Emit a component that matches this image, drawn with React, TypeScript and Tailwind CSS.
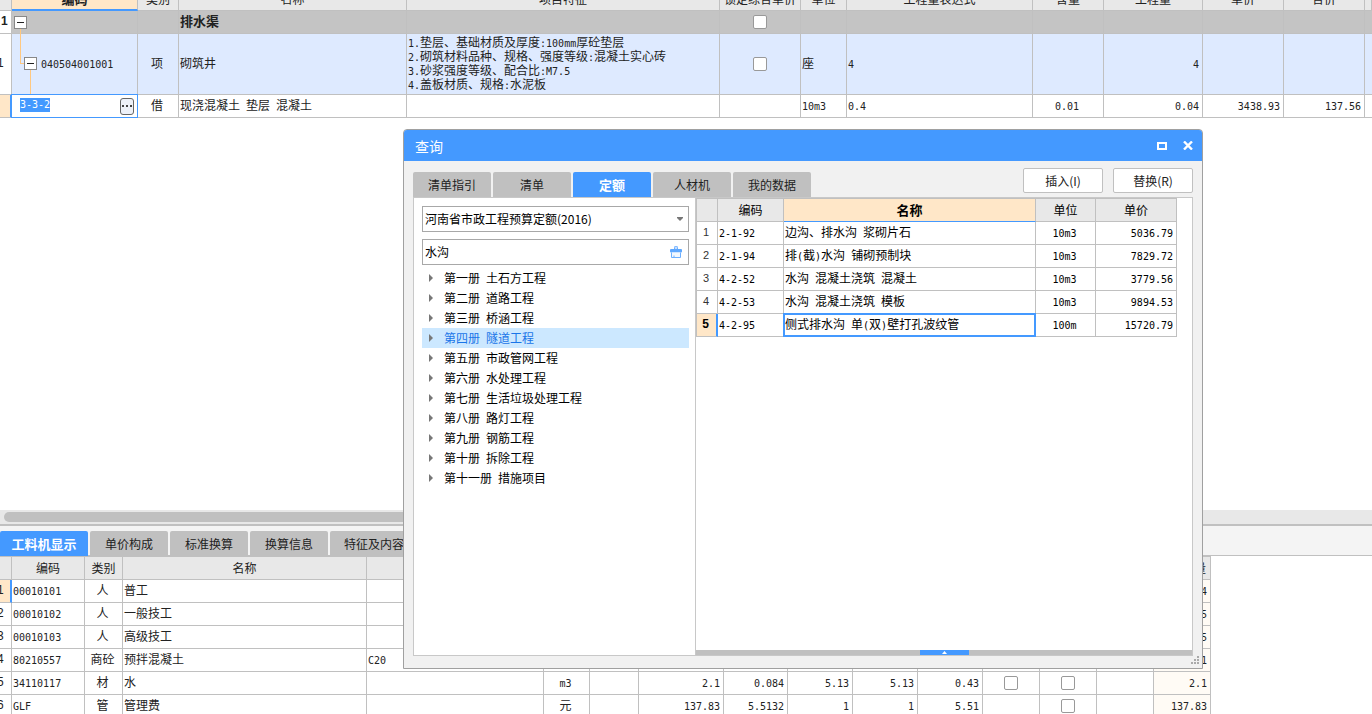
import React, { useState } from 'react';
import clsx from 'clsx';

interface MixedProps {
  text: string;
}

// Latin runs use a half-width mono face so that they line up with the CJK grid
const Mixed: React.FC<MixedProps> = ({ text }) => (
  <>
    {text.split(/([\x20-\x7e]+)/).map((part, i) =>
      i % 2 ? (
        <span key={i} className="font-['DejaVu_Sans_Mono',monospace] text-[10px] leading-none font-normal whitespace-pre">{part}</span>
      ) : (
        part
      ),
    )}
  </>
);

interface CellProps {
  className?: string;
  children?: React.ReactNode;
}

const Th: React.FC<CellProps> = ({ className, children }) => (
  <th className={clsx('h-[23px] border-r border-b border-[#c0c0c0] p-0 text-center whitespace-nowrap', className)}>
    {children}
  </th>
);

const Td: React.FC<CellProps> = ({ className, children }) => (
  <td className={clsx('relative h-[23px] border-r border-b border-[#c0c0c0] pt-0 pr-[3px] pb-0.5 pl-px whitespace-nowrap', className)}>
    {typeof children === 'string' ? <Mixed text={children} /> : children}
  </td>
);

const Check: React.FC<{ label: string }> = ({ label }) => (
  <div className="flex justify-center pt-0.5 pl-0.5">
    <input
      type="checkbox"
      aria-label={label}
      className="size-3.5 appearance-none rounded-[2px] border border-[#999] bg-white checked:bg-[#4499ff]"
    />
  </div>
);

const Toggle: React.FC = () => (
  <button
    type="button"
    aria-label="折叠"
    className="flex size-[13px] shrink-0 items-center justify-center border border-[#888] bg-white"
  >
    <span className="h-px w-[7px] bg-[#222]" />
  </button>
);

const itemColumns = [
  'w-[12px]', 'w-[126px]', 'w-[41px]', 'w-[228px]', 'w-[313px]', 'w-[81px]', 'w-[46px]',
  'w-[186px]', 'w-[71px]', 'w-[99px]', 'w-[81px]', 'w-[81px]', '',
];

const itemHeads = ['类别', '名称', '项目特征', '锁定综合单价', '单位', '工程量表达式', '含量', '工程量', '单价', '合价', ''];

const ItemGrid: React.FC = () => (
  <table className="-mt-[12px] w-full table-fixed border-separate border-spacing-0">
    <colgroup>
      {itemColumns.map((width, i) => <col key={i} className={width} />)}
    </colgroup>
    <thead className="bg-[#e8e8e8]">
      <tr>
        <Th />
        <Th className="border-b-2 border-b-[#4499ff] bg-[#ffe7c8] text-[13px] font-bold">编码</Th>
        {itemHeads.map((head, i) => <Th key={i} className="font-normal">{head}</Th>)}
      </tr>
    </thead>
    <tbody>
      <tr className="bg-[#c4c4c4]">
        <Td className="bg-white font-['Liberation_Sans'] font-bold"><span>1</span></Td>
        <Td>
          <span className="absolute top-[17px] bottom-0 left-2 w-px bg-[#ffc880]" />
          <div className="relative pt-0.5 pl-px"><Toggle /></div>
        </Td>
        <Td />
        <Td className="text-[13px] font-bold">排水渠</Td>
        <Td />
        <Td><Check label="锁定综合单价 排水渠" /></Td>
        <Td /><Td /><Td /><Td /><Td /><Td />
        <Td className="border-r-0" />
      </tr>
      <tr className="bg-[#deeaff]">
        <Td className="bg-white font-['Liberation_Sans']"><span className="-ml-1">1</span></Td>
        <Td className="h-[61px]">
          <span className="absolute -top-px left-2 h-[31px] w-1 border-b border-l border-[#ffc880]" />
          <span className="absolute top-[36px] bottom-0 left-[18px] w-px bg-[#ffc880]" />
          <div className="flex items-center gap-1 pl-[11px]">
            <Toggle />
            <span><Mixed text="040504001001" /></span>
          </div>
        </Td>
        <Td className="text-center">项</Td>
        <Td>砌筑井</Td>
        <Td>
          <p><Mixed text="1.垫层、基础材质及厚度:100mm厚砼垫层" /></p>
          <p><Mixed text="2.砌筑材料品种、规格、强度等级:混凝土实心砖" /></p>
          <p><Mixed text="3.砂浆强度等级、配合比:M7.5" /></p>
          <p><Mixed text="4.盖板材质、规格:水泥板" /></p>
        </Td>
        <Td><Check label="锁定综合单价 砌筑井" /></Td>
        <Td>座</Td>
        <Td>4</Td>
        <Td />
        <Td className="text-right">4</Td>
        <Td /><Td />
        <Td className="border-r-0" />
      </tr>
      <tr>
        <Td className="border-r-2 border-r-[#4499ff] bg-[#ffe7c8]" />
        <Td>
          <span className="pointer-events-none absolute -inset-px border border-[#4499ff]" />
          <div className="flex items-start justify-between pt-0.5 pl-[7px]">
            <input
              aria-label="编码"
              defaultValue="3-3-2"
              className="h-3.5 w-[30px] bg-[#4499ff] font-['DejaVu_Sans_Mono',monospace] text-[10px] text-white outline-none"
            />
            <button
              type="button"
              aria-label="选择编码"
              className="flex h-[17px] w-3.5 items-center justify-center gap-0.5 rounded-[3px] border border-[#666] bg-[#eef1f8]"
            >
              <span className="size-0.5 bg-[#444]" />
              <span className="size-0.5 bg-[#444]" />
              <span className="size-0.5 bg-[#444]" />
            </button>
          </div>
        </Td>
        <Td className="text-center">借</Td>
        <Td>现浇混凝土 垫层 混凝土</Td>
        <Td /><Td />
        <Td>10m3</Td>
        <Td>0.4</Td>
        <Td className="text-center">0.01</Td>
        <Td className="text-right">0.04</Td>
        <Td className="text-right">3438.93</Td>
        <Td className="text-right">137.56</Td>
        <Td className="border-r-0" />
      </tr>
    </tbody>
  </table>
);

const resourceColumns = [
  'w-[12px]', 'w-[73px]', 'w-[38px]', 'w-[244px]', 'w-[177px]', 'w-[46px]', 'w-[49px]', 'w-[85px]',
  'w-[64px]', 'w-[65px]', 'w-[65px]', 'w-[65px]', 'w-[57px]', 'w-[57px]', 'w-[57px]', 'w-[57px]',
];

const resourceHeads = ['编码', '类别', '名称', '', '', '', '', '', '', '', '', '', '', '', '合计数量'];

interface Resource {
  code: string;
  kind: string;
  name: string;
  spec?: string;
  unit?: string;
  figures?: string[];
  checks?: [boolean, boolean];
  total: string;
}

const resources: Resource[] = [
  { code: '00010101', kind: '人', name: '普工', total: '4' },
  { code: '00010102', kind: '人', name: '一般技工', total: '5' },
  { code: '00010103', kind: '人', name: '高级技工', total: '5' },
  { code: '80210557', kind: '商砼', name: '预拌混凝土', spec: 'C20', total: '1' },
  { code: '34110117', kind: '材', name: '水', unit: 'm3', figures: ['2.1', '0.084', '5.13', '5.13', '0.43'], checks: [true, true], total: '2.1' },
  { code: 'GLF', kind: '管', name: '管理费', unit: '元', figures: ['137.83', '5.5132', '1', '1', '5.51'], checks: [false, true], total: '137.83' },
];

const ResourceGrid: React.FC = () => (
  <table className="w-[1211px] table-fixed border-separate border-spacing-0 border-t border-[#c0c0c0]">
    <colgroup>
      {resourceColumns.map((width, i) => <col key={i} className={width} />)}
    </colgroup>
    <thead className="bg-[#e8e8e8]">
      <tr>
        <Th />
        {resourceHeads.map((head, i) => <Th key={i} className="font-normal">{head}</Th>)}
      </tr>
    </thead>
    <tbody>
      {resources.map((row, i) => (
        <tr key={row.code}>
          <Td className={clsx("font-['Liberation_Sans']", i === 0 && 'border-r-2 border-r-[#4499ff] bg-[#ffe7c8]')}>
            <span className="-ml-1">{i + 1}</span>
          </Td>
          <Td>{row.code}</Td>
          <Td className="text-center">{row.kind}</Td>
          <Td>{row.name}</Td>
          <Td>{row.spec}</Td>
          <Td className="text-center">{row.unit}</Td>
          <Td />
          {[0, 1, 2, 3, 4].map((n) => (
            <Td key={n} className="text-right">{row.figures?.[n]}</Td>
          ))}
          <Td>{row.checks?.[0] && <Check label={`暂估 ${row.name}`} />}</Td>
          <Td>{row.checks?.[1] && <Check label={`锁定 ${row.name}`} />}</Td>
          <Td />
          <Td className="bg-[#fffbf5] text-right">{row.total}</Td>
        </tr>
      ))}
    </tbody>
  </table>
);

interface TabBarProps {
  tabs: string[];
  active: string;
  onSelect: (tab: string) => void;
}

const TabBar: React.FC<TabBarProps> = ({ tabs, active, onSelect }) => (
  <div role="tablist" className="flex gap-0.5">
    {tabs.map((tab) => (
      <button
        key={tab}
        type="button"
        role="tab"
        aria-selected={tab === active}
        onClick={() => onSelect(tab)}
        className={clsx(
          'h-[25px] rounded-t-[2px] whitespace-nowrap',
          tab === active ? 'bg-[#4499ff] text-[13px] font-bold text-white' : 'bg-[#c0c0c0]',
          tab.length > 4 ? 'w-[88px]' : 'w-[78px]',
        )}
      >
        {tab}
      </button>
    ))}
  </div>
);

const volumes = [
  '第一册 土石方工程', '第二册 道路工程', '第三册 桥涵工程', '第四册 隧道工程', '第五册 市政管网工程', '第六册 水处理工程',
  '第七册 生活垃圾处理工程', '第八册 路灯工程', '第九册 钢筋工程', '第十册 拆除工程', '第十一册 措施项目',
];

const quotas = [
  { code: '2-1-92', name: '边沟、排水沟 浆砌片石', unit: '10m3', price: '5036.79' },
  { code: '2-1-94', name: '排(截)水沟 铺砌预制块', unit: '10m3', price: '7829.72' },
  { code: '4-2-52', name: '水沟 混凝土浇筑 混凝土', unit: '10m3', price: '3779.56' },
  { code: '4-2-53', name: '水沟 混凝土浇筑 模板', unit: '10m3', price: '9894.53' },
  { code: '4-2-95', name: '侧式排水沟 单(双)壁打孔波纹管', unit: '100m', price: '15720.79' },
];

const QuotaTree: React.FC = () => {
  const [volume, setVolume] = useState('第四册 隧道工程');

  return (
    <div className="w-[282px] shrink-0 border-r border-[#c8c8c8] pt-2 pr-1.5 pl-2">
      <div className="relative">
        <select
          aria-label="定额库"
          className="block h-[26px] w-full appearance-none border border-[#a8a8a8] bg-white px-0.5 text-black outline-none"
        >
          <option>河南省市政工程预算定额(2016)</option>
        </select>
        <svg className="pointer-events-none absolute top-[11px] right-1.5" width="6" height="4" viewBox="0 0 6 4" fill="#777">
          <path d="M0 0h6v1L3 4 0 1z" />
        </svg>
      </div>
      <div className="mt-[7px] flex h-[26px] items-center border border-[#a8a8a8] pr-1.5">
        <input aria-label="搜索" defaultValue="水沟" className="min-w-0 flex-1 px-0.5 text-black outline-none" />
        <button type="button" aria-label="清除">
          <svg width="12" height="12" viewBox="0 0 12 12">
            <path d="M4.5 3.5V1.5a1.5 1.5 0 0 1 3 0v2" fill="#c4deff" stroke="#6cafff" />
            <rect y="3" width="12" height="3.5" rx="1" fill="#5ea8ff" />
            <path d="M1.5 6.5v5h9v-5" fill="#f2f8ff" stroke="#6cafff" />
            <path d="M4 11.5V9.5" stroke="#6cafff" />
          </svg>
        </button>
      </div>
      <ul className="mt-[3px]">
        {volumes.map((item) => (
          <li key={item}>
            <button
              type="button"
              onClick={() => setVolume(item)}
              className={clsx(
                'flex h-5 w-full items-center gap-[11px] pb-px pl-[7px] text-left',
                item === volume ? 'bg-[#cce8ff] text-[#1a75e8]' : 'text-black',
              )}
            >
              <svg width="4" height="8" viewBox="0 0 4 8" fill="#777">
                <path d="M0 0l4 4-4 4z" />
              </svg>
              <span><Mixed text={item} /></span>
            </button>
          </li>
        ))}
      </ul>
    </div>
  );
};

const QuotaGrid: React.FC = () => (
  <table className="w-[481px] table-fixed border-separate border-spacing-0 border-t border-l border-[#c0c0c0] text-black">
    <colgroup>
      <col className="w-[21px]" />
      <col className="w-[66px]" />
      <col className="w-[252px]" />
      <col className="w-[60px]" />
      <col className="w-[81px]" />
    </colgroup>
    <thead className="bg-[#e8e8e8]">
      <tr>
        <Th />
        <Th className="font-normal">编码</Th>
        <Th className="border-b-[#4499ff] bg-[#ffe7c8] text-[13px] font-bold">名称</Th>
        <Th className="font-normal">单位</Th>
        <Th className="font-normal">单价</Th>
      </tr>
    </thead>
    <tbody>
      {quotas.map((row, i) => {
        const selected = i === quotas.length - 1;
        return (
          <tr key={row.code}>
            <Td
              className={clsx(
                "text-center font-['Liberation_Sans']",
                selected ? 'border-r-2 border-r-[#4499ff] bg-[#ffe7c8] font-bold' : 'text-[11px] text-[#333]',
              )}
            >
              <span>{i + 1}</span>
            </Td>
            <Td>{row.code}</Td>
            <Td>
              <Mixed text={row.name} />
              {selected && <span className="pointer-events-none absolute -inset-px border-2 border-[#4499ff]" />}
            </Td>
            <Td className="text-center">{row.unit}</Td>
            <Td className="text-right">{row.price}</Td>
          </tr>
        );
      })}
    </tbody>
  </table>
);

const QueryDialog: React.FC = () => {
  const [tab, setTab] = useState('定额');

  return (
    <section
      role="dialog"
      aria-label="查询"
      className="absolute top-[129px] left-[403px] flex h-[540px] w-[800px] flex-col overflow-hidden rounded-t-[4px] border border-[#a0a0a0] bg-[#f1f1f1]"
    >
      <header className="flex h-[31px] shrink-0 items-center bg-[#4499ff] pr-[9px] pl-[11px] text-white">
        <h2 className="flex-1 text-sm">查询</h2>
        <div className="flex items-center gap-4">
          <button type="button" aria-label="最大化">
            <svg width="10" height="8" viewBox="0 0 10 8" fill="none" stroke="white" strokeWidth="2">
              <path d="M1 1h8v6H1z" />
            </svg>
          </button>
          <button type="button" aria-label="关闭">
            <svg width="10" height="9" viewBox="0 0 10 9" fill="none" stroke="white" strokeWidth="2.4">
              <path d="M1 .5l8 8M9 .5l-8 8" />
            </svg>
          </button>
        </div>
      </header>

      <div className="flex h-9 shrink-0 items-end justify-between px-[9px]">
        <TabBar tabs={['清单指引', '清单', '定额', '人材机', '我的数据']} active={tab} onSelect={setTab} />
        <div className="flex gap-2.5 pb-1">
          <button type="button" className="h-[25px] w-20 rounded-[2px] border border-[#c0c0c0] bg-white">插入(I)</button>
          <button type="button" className="h-[25px] w-20 rounded-[2px] border border-[#c0c0c0] bg-white">替换(R)</button>
        </div>
      </div>

      <div className="mx-[9px] mb-3 flex min-h-0 flex-1 border border-[#c8c8c8] bg-white">
        <QuotaTree />
        <div className="flex flex-1 flex-col justify-between">
          <QuotaGrid />
          <div className="flex h-[5px] justify-center bg-[#c0c0c0]">
            <button type="button" aria-label="展开" className="flex h-full w-[49px] items-center justify-center bg-[#4499ff]">
              <svg width="5" height="3" viewBox="0 0 5 3" fill="white">
                <path d="M0 3h5L2.5 0z" />
              </svg>
            </button>
          </div>
        </div>
      </div>

      <svg className="absolute right-[3px] bottom-1" width="8" height="8" viewBox="0 0 8 8" fill="#aaa">
        <path d="M6 0h2v2H6zM3 3h2v2H3zM6 3h2v2H6zM0 6h2v2H0zM3 6h2v2H3zM6 6h2v2H6z" />
      </svg>
    </section>
  );
};

const App: React.FC = () => {
  const [tab, setTab] = useState('工料机显示');

  return (
    <div className="relative flex h-screen flex-col overflow-hidden bg-white font-['Noto_Sans_CJK_SC',sans-serif] text-[12px] leading-[14px] text-[#222]">
      <main className="min-h-0 flex-1 overflow-hidden">
        <ItemGrid />
      </main>

      <div className="h-3.5 shrink-0 bg-[#e8e8e8] py-0.5 pl-1">
        <div className="h-2.5 w-10/12 rounded-full bg-[#c0c0c0]" />
      </div>

      <section className="h-[190px] shrink-0 overflow-hidden border-t-2 border-[#c0c0c0]">
        <div className="h-[30px] border-b border-[#c0c0c0] bg-[#f4f4f4] pt-[5px]">
          <TabBar tabs={['工料机显示', '单价构成', '标准换算', '换算信息', '特征及内容']} active={tab} onSelect={setTab} />
        </div>
        <ResourceGrid />
      </section>

      <QueryDialog />
    </div>
  );
};

export default App;
